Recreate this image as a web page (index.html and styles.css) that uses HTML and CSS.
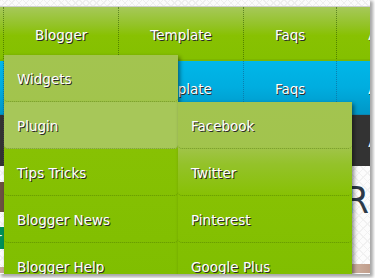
FILE: index.html
```html
<!DOCTYPE html>
<html>
<head>
<meta charset="utf-8">
<link rel="stylesheet" href="styles.css">
</head>
<body>
<div class="window">
  <div class="topstrip"></div>
  <nav class="menu green">
    <ul class="bar">
      <li class="item has-sub"><a>Blogger</a>
        <ul class="sub">
          <li><a>Widgets</a></li>
          <li class="hover has-sub2"><a>Plugin</a>
            <ul class="sub sub2">
              <li><a>Facebook</a></li>
              <li><a>Twitter</a></li>
              <li><a>Pinterest</a></li>
              <li><a>Google Plus</a></li>
            </ul>
          </li>
          <li><a>Tips Tricks</a></li>
          <li><a>Blogger News</a></li>
          <li><a>Blogger Help</a></li>
        </ul>
      </li>
      <li class="item"><a>Template</a></li>
      <li class="item"><a>Faqs</a></li>
      <li class="item"><a>About</a></li>
    </ul>
  </nav>
  <nav class="menu blue">
    <ul class="bar">
      <li class="item"><a>Blogger</a></li>
      <li class="item"><a>Template</a></li>
      <li class="item"><a>Faqs</a></li>
      <li class="item"><a>About</a></li>
    </ul>
  </nav>
  <nav class="menu dark">
    <ul class="bar">
      <li class="item"><a>Blogger</a></li>
      <li class="item"><a>Template</a></li>
      <li class="item"><a>Faqs</a></li>
      <li class="item"><a>About</a></li>
    </ul>
  </nav>
  <div class="content">
    <div class="side">
      <span class="blk brown"></span>
      <span class="blk teal">r</span>
      <span class="blk tan"></span>
    </div>
    <div class="main">
      <h1 class="title">DROPDOWN MENU FOR BLOGGER</h1>
      <div class="thumb"></div>
    </div>
  </div>
</div>
</body>
</html>
```

FILE: styles.css
```css
* { box-sizing: border-box; }
html, body { margin: 0; padding: 0; }
body {
  width: 375px;
  height: 278px;
  overflow: hidden;
  background: #ffffff;
  font-family: "DejaVu Sans", Verdana, sans-serif;
}
.window {
  position: relative;
  width: 370px;
  height: 274px;
  overflow: hidden;
  background: #fbfbfb;
  box-shadow: 2px 2px 3px 1px rgba(0,0,0,0.35);
}
.topstrip {
  height: 7px;
  background:
    repeating-linear-gradient(45deg, #eeeeee 0 1px, transparent 1px 5px),
    repeating-linear-gradient(-45deg, #eeeeee 0 1px, transparent 1px 5px),
    #fbfbfb;
  border-bottom: 1px solid #cfcfcf;
}
.menu { position: relative; }
.bar {
  list-style: none;
  margin: 0;
  padding: 0 0 0 3px;
  display: flex;
  white-space: nowrap;
}
.item {
  position: relative;
  border-left: 1px dotted rgba(40,80,0,0.55);
  padding: 3px 31px 0 31px;
  display: flex;
  align-items: center;
}
.item > a, .sub a {
  color: #ffffff;
  font-size: 13.5px;
  line-height: 16px;
  text-shadow: 1px 1px 0 #2a2a2a;
}
.green {
  height: 54px;
  background: linear-gradient(#a6c85a 0, #93c326 35%, #88c102 55%, #84c000 100%);
  border-bottom: 2px solid #7db600;
  z-index: 5;
}
.green .bar, .blue .bar { height: 100%; }
.blue {
  height: 54px;
  background: linear-gradient(#00b7e9 0, #00addf 50%, #0097c7 100%);
  border-bottom: 1px solid #0a86b2;
}
.blue .item { border-left-color: #0a7fae; }
.dark {
  height: 51px;
  background: #333333;
}
.dark .bar { height: 100%; }
.dark .item { border-left-color: #444; }

.sub {
  position: absolute;
  left: 0;
  top: 48px;
  width: 174px;
  list-style: none;
  margin: 0;
  padding: 0;
  background: linear-gradient(#a3c450 0, #a2c44d 44px, #94c22a 62px, #87c103 94px, #7fbe00 100%);
  box-shadow: 2px 2px 4px rgba(0,0,0,0.45);
  z-index: 10;
}
.sub li {
  position: relative;
  padding: 16px 13px 14px 13px;
  border-bottom: 1px dotted rgba(60,100,0,0.45);
  border-radius: 4px;
}
.sub a { display: block; }
.sub li.hover { background: #a7c759; }
.sub2 {
  left: 174px;
  top: 0;
  text-align: left;
  z-index: 20;
}

.content {
  display: grid;
  grid-template-columns: 4px 1fr;
  height: 107px;
  background:
    repeating-linear-gradient(45deg, #f1f1f1 0 1px, transparent 1px 6px),
    repeating-linear-gradient(-45deg, #f1f1f1 0 1px, transparent 1px 6px),
    #fcfcfc;
}
.side {
  display: flex;
  flex-direction: column;
  padding-top: 16px;
}
.blk { display: block; overflow: hidden; }
.brown { height: 30px; background: #6c5141; }
.teal {
  height: 22px;
  margin-top: 15px;
  background: #00905a;
  color: #fff;
  font-size: 14px;
  line-height: 22px;
  text-indent: -4px;
}
.tan { margin-top: auto; height: 6px; background: #c6a796; }
.main {
  display: flex;
  flex-direction: column;
  overflow: hidden;
}
.title {
  margin: 14px 0 0 0;
  font-family: "DejaVu Sans Condensed", "DejaVu Sans", sans-serif;
  font-weight: normal;
  font-size: 38px;
  line-height: 40px;
  color: #2d3a48;
  text-align: right;
  white-space: nowrap;
  padding-right: 1px;
  direction: rtl;
}
.thumb {
  margin-top: auto;
  margin-left: auto;
  width: 18px;
  height: 9px;
  background: linear-gradient(90deg, #cfb2a2, #c09e8c);
}
```
